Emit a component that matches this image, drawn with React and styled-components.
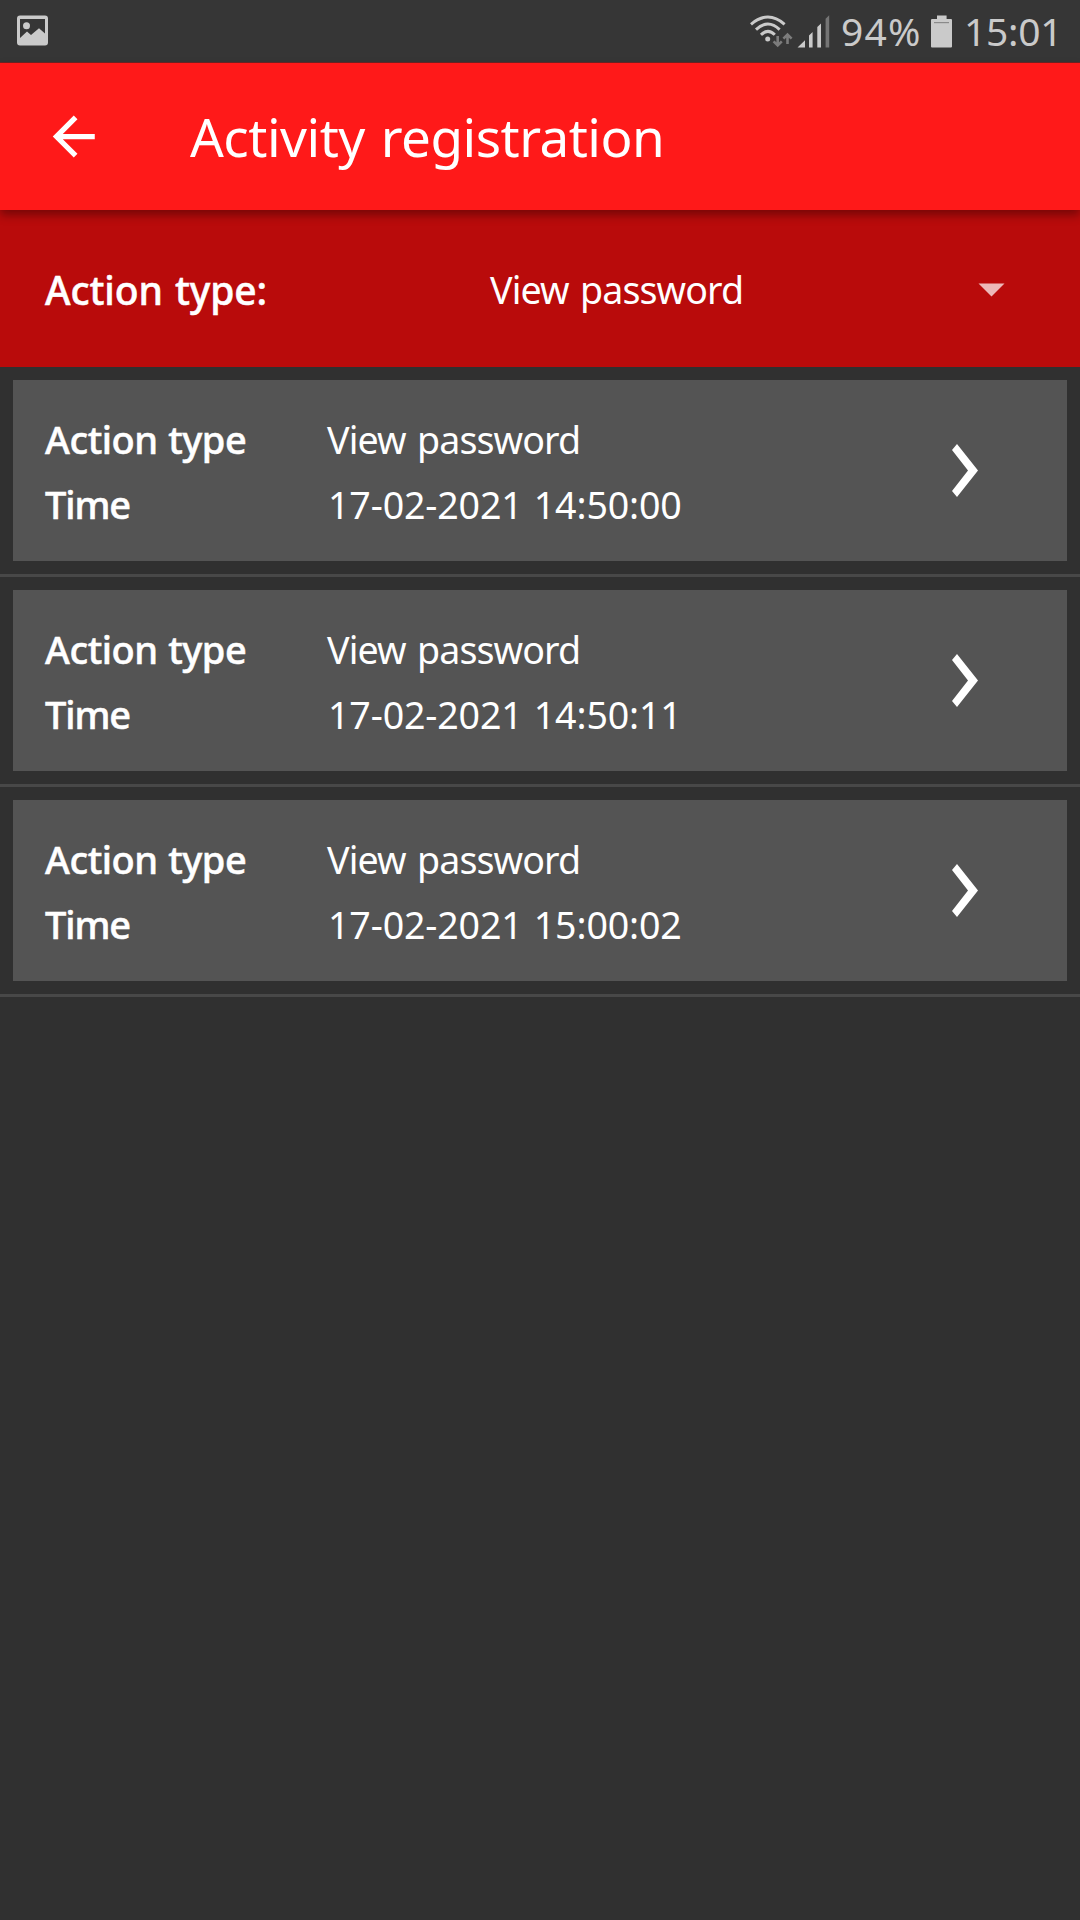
import React from "react";
import styled, { createGlobalStyle } from "styled-components";

const GlobalStyle = createGlobalStyle`
  * { box-sizing: border-box; }
  html, body { margin: 0; background: #303030; }
  body { font-family: "Noto Sans", "Open Sans", sans-serif; color: #fff; }
`;

const Screen = styled.div`
  width: 1080px;
  height: 1920px;
  display: flex;
  flex-direction: column;
  background: #303030;
  overflow: hidden;
`;

const StatusBar = styled.header`
  height: 63px;
  flex: none;
  display: flex;
  align-items: center;
  justify-content: space-between;
  padding: 0 20px 0 14px;
  background: #363636;
  border-bottom: 1px solid #6e2424;
  color: #cacaca;
`;

const StatusGroup = styled.div`
  display: flex;
  align-items: center;
`;

const StatusIcon = styled.svg`
  display: block;
  flex: none;
`;

const StatusText = styled.span`
  width: ${(p) => p.$width}px;
  padding-left: ${(p) => p.$inset || 0}px;
  font-size: 39px;
  line-height: 60px;
  letter-spacing: ${(p) => p.$tracking || 0}px;
  white-space: nowrap;
`;

const AppBar = styled.div`
  position: relative;
  z-index: 1;
  height: 147px;
  flex: none;
  display: flex;
  align-items: center;
  padding-left: 42px;
  background: #ff1919;
  box-shadow: 0 5px 9px rgba(0, 0, 0, 0.36);
`;

const BackButton = styled.button`
  display: flex;
  width: 148px;
  padding: 0;
  border: 0;
  background: none;
  color: #fff;
`;

const Title = styled.h1`
  margin: 0;
  font-size: 53px;
  font-weight: 400;
  line-height: 72px;
  letter-spacing: -0.5px;
  word-spacing: 2.5px;
`;

const FilterBar = styled.div`
  height: 157px;
  flex: none;
  display: flex;
  align-items: center;
  padding: 2px 75px 0 45px;
  background: #b90b0b;
`;

const FilterLabel = styled.label`
  width: 445px;
  font-size: 39px;
  font-weight: 500;
  letter-spacing: -0.1px;
  word-spacing: 2px;
  -webkit-text-stroke: 0.5px currentColor;
`;

const Select = styled.div`
  flex: 1;
  display: flex;
  align-items: center;
  justify-content: space-between;
`;

const Value = styled.span`
  font-size: 37.6px;
  line-height: 65px;
  letter-spacing: -0.9px;
  word-spacing: 2.5px;
  white-space: nowrap;
`;

const TimeValue = styled(Value)`
  padding-left: 1px;
  letter-spacing: -0.15px;
  word-spacing: 1.5px;
`;

const List = styled.ul`
  margin: 0;
  padding: 0;
  list-style: none;
`;

const ListItem = styled.li`
  padding: 13px;
  border-bottom: 3px solid #484848;
`;

const Card = styled.article`
  height: 181px;
  display: flex;
  align-items: center;
  justify-content: space-between;
  padding: 0 89px 0 32px;
  background: #545454;
`;

const Fields = styled.div`
  display: grid;
  grid-template-columns: 282px auto;
  grid-auto-rows: 65px;
  padding-top: 3px;
`;

const FieldName = styled.span`
  font-size: 38px;
  font-weight: 500;
  line-height: 65px;
  letter-spacing: ${(p) => p.$tracking}px;
  word-spacing: 1px;
  -webkit-text-stroke: 0.5px currentColor;
`;

function PictureIcon() {
  return (
    <StatusIcon width="36" height="36" viewBox="14 12 36 36">
      <path
        fill="#cacaca"
        fillRule="evenodd"
        d="M20 14.5H45Q48 14.5 48 17.5V41.5Q48 44.5 45 44.5H20Q17 44.5 17 41.5V17.5Q17 14.5 20 14.5ZM20 18V37L27 30.5L31 34L39 27.3L45 32.5V18Z"
      />
      <circle cx="26.5" cy="24.7" r="3.5" fill="#cacaca" />
    </StatusIcon>
  );
}

function NetworkIcon() {
  return (
    <StatusIcon width="84" height="36" viewBox="748 12 84 36">
      <g fill="none" stroke="#cacaca" strokeWidth="3">
        <path d="M751 23.3Q768 8.8 784.6 23.3" />
        <path d="M756 28.6Q768 17.4 779.6 28.6" />
        <path d="M761 33.8Q768 27 774.8 33.8" />
      </g>
      <circle cx="767.7" cy="38" r="2.5" fill="#cacaca" />
      <g fill="none" stroke="#7c7c7c" strokeWidth="2.6">
        <path d="M777.7 35V44.5M773.6 40.3L777.7 44.4L781.8 40.3" />
        <path d="M787.5 43V33.5M783.4 37.6L787.5 33.5L791.6 37.6" />
      </g>
      <path
        fill="#cacaca"
        d="M797.5 46.5L805 39.3V46.5ZM809 34.5L812.6 31V46.5H809ZM817.3 26L821 22.5V46.5H817.3Z"
      />
      <path fill="#757575" d="M825.6 17.7L829.2 14.2V46.5H825.6Z" />
    </StatusIcon>
  );
}

function BatteryIcon() {
  return (
    <StatusIcon width="24" height="36" viewBox="929 12 24 36">
      <path fill="#cacaca" d="M937 14.5H946.6V18H951Q952 18 952 19V45.5Q952 46.5 951 46.5H932Q931 46.5 931 45.5V19Q931 18 932 18H937Z" />
      <path stroke="#8a8a8a" strokeWidth="1.2" d="M934 21.6H949" />
    </StatusIcon>
  );
}

function ArrowBack() {
  return (
    <svg width="63" height="63" viewBox="-0.1 0 24 24" fill="currentColor">
      <path d="M20 11H7.83l5.59-5.59L12 4l-8 8 8 8 1.41-1.41L7.83 13H20v-2z" />
    </svg>
  );
}

function Caret() {
  return (
    <svg width="27" height="14" viewBox="0 0 27 14">
      <path d="M0.5 0.5H26.5L13.5 13.6Z" fill="#edb9b9" />
    </svg>
  );
}

function Chevron() {
  return (
    <svg width="26" height="54" viewBox="0 0.5 26 54">
      <path d="M0 6.5L5 0.5L26 27L5 53.5L0 47.5L16 27Z" fill="#fff" />
    </svg>
  );
}

const entries = [
  { type: "View password", time: "17-02-2021 14:50:00" },
  { type: "View password", time: "17-02-2021 14:50:11" },
  { type: "View password", time: "17-02-2021 15:00:02" },
];

export default function App() {
  return (
    <>
      <GlobalStyle />
      <Screen>
        <StatusBar>
          <PictureIcon />
          <StatusGroup>
            <NetworkIcon />
            <StatusText $width={97} $inset={9} $tracking={1.2}>94%</StatusText>
            <BatteryIcon />
            <StatusText $width={107} $inset={11} $tracking={-0.3}>15:01</StatusText>
          </StatusGroup>
        </StatusBar>
        <AppBar>
          <BackButton aria-label="Back">
            <ArrowBack />
          </BackButton>
          <Title>Activity registration</Title>
        </AppBar>
        <FilterBar>
          <FilterLabel>Action type:</FilterLabel>
          <Select>
            <Value>View password</Value>
            <Caret />
          </Select>
        </FilterBar>
        <List>
          {entries.map((entry) => (
            <ListItem key={entry.time}>
              <Card>
                <Fields>
                  <FieldName $tracking={-0.45}>Action type</FieldName>
                  <Value>{entry.type}</Value>
                  <FieldName $tracking={-1.1}>Time</FieldName>
                  <TimeValue>{entry.time}</TimeValue>
                </Fields>
                <Chevron />
              </Card>
            </ListItem>
          ))}
        </List>
      </Screen>
    </>
  );
}
